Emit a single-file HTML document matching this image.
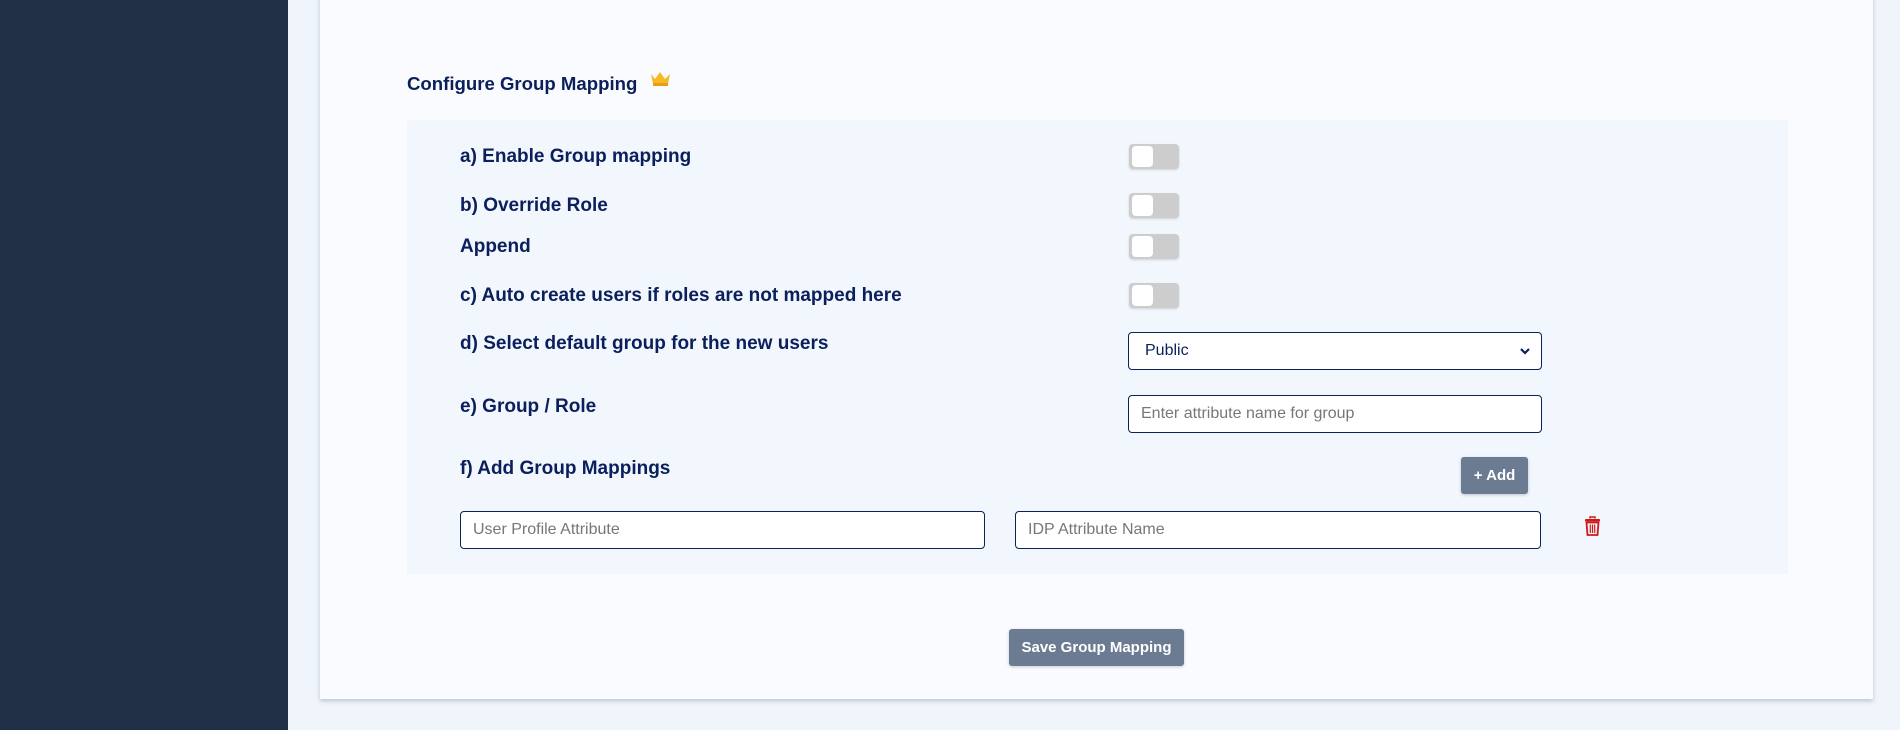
<!DOCTYPE html>
<html><head><meta charset="utf-8"><style>
*{box-sizing:border-box;margin:0;padding:0}
body{width:1900px;height:730px;overflow:hidden;background:#f0f4fb;font-family:"Liberation Sans",Arial,sans-serif;position:relative}
.side{position:absolute;left:0;top:0;width:288px;height:730px;background:#223047}
.card{position:absolute;left:320px;top:-10px;width:1553px;height:709px;background:#f9fbfe;box-shadow:0 2px 4px rgba(120,140,170,.45)}
.abs{position:absolute}
.title{left:407px;top:73px;font-size:18.6px;font-weight:bold;color:#0a1f5c}
.panel{left:407px;top:120px;width:1381px;height:454px;background:#f2f6fd}
.lbl{position:absolute;left:460px;font-size:19px;font-weight:bold;color:#0a1f5c;line-height:22px}
.tog{position:absolute;left:1129px;width:50px;height:25px;background:#cdcdcd;border-radius:4px;box-shadow:0 1px 2px rgba(0,0,0,.15)}
.tog:after{content:"";position:absolute;left:3px;top:2px;width:21px;height:21px;background:#fff;border-radius:4px}
.inp{position:absolute;background:#fff;border:1.5px solid #0b2257;border-radius:4px;font-size:16px;color:#777;padding-left:12px;display:flex;align-items:center}
.btn{position:absolute;background:#6b7b92;color:#fff;font-weight:bold;font-size:15px;border-radius:3px;display:flex;align-items:center;justify-content:center;box-shadow:0 1px 3px rgba(0,0,0,.2)}
</style></head><body>
<div class="side"></div>
<div class="card"></div>
<div class="abs title">Configure Group Mapping</div>
<svg class="abs" style="left:650px;top:71px" width="21" height="16" viewBox="0 0 21 16"><path d="M1 3 L5 8 L10 1 L15 8 L20 3 L18 13 L3 13 Z" fill="#f6b824"/><rect x="3" y="12" width="15" height="3" fill="#ee9a12"/></svg>
<div class="abs panel"></div>
<div class="lbl" style="top:146px">a) Enable Group mapping</div>
<div class="lbl" style="top:195px">b) Override Role</div>
<div class="lbl" style="top:236px">Append</div>
<div class="lbl" style="top:285px">c) Auto create users if roles are not mapped here</div>
<div class="lbl" style="top:333px">d) Select default group for the new users</div>
<div class="lbl" style="top:396px">e) Group / Role</div>
<div class="lbl" style="top:458px">f) Add Group Mappings</div>
<div class="tog" style="top:144px"></div>
<div class="tog" style="top:193px"></div>
<div class="tog" style="top:234px"></div>
<div class="tog" style="top:283px"></div>
<div class="inp" style="left:1128px;top:332px;width:414px;height:38px;color:#0a1f5c;padding-left:16px">Public
<svg style="position:absolute;right:10px;top:14px" width="12" height="9" viewBox="0 0 12 9"><path d="M2 2 L6 6 L10 2" stroke="#0a1f5c" stroke-width="2.2" fill="none"/></svg></div>
<div class="inp" style="left:1128px;top:395px;width:414px;height:38px">Enter attribute name for group</div>
<div class="btn" style="left:1461px;top:457px;width:67px;height:37px">+ Add</div>
<div class="inp" style="left:460px;top:511px;width:525px;height:38px">User Profile Attribute</div>
<div class="inp" style="left:1015px;top:511px;width:526px;height:38px">IDP Attribute Name</div>
<svg class="abs" style="left:1584px;top:516px" width="17" height="20" viewBox="0 0 17 20"><path d="M6 2.5 V1 H11 V2.5" stroke="#d01818" stroke-width="1.5" fill="none"/><rect x="1" y="3" width="15" height="2.5" rx="0.8" fill="#d01818"/><path d="M2.5 6.5 H14.5 L13.5 19 H3.5 Z" fill="none" stroke="#d01818" stroke-width="1.8"/><path d="M6.3 8.5 V17 M8.5 8.5 V17 M10.7 8.5 V17" stroke="#d01818" stroke-width="1.2"/></svg>
<div class="btn" style="left:1009px;top:629px;width:175px;height:37px">Save Group Mapping</div>
</body></html>
